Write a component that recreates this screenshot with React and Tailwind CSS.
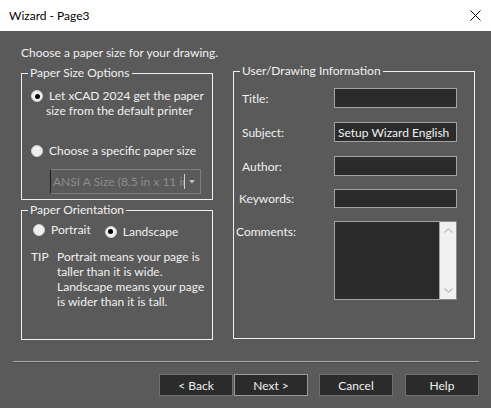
import React from "react";

function Radio({ checked }) {
  return (
    <span className="w-[12px] h-[12px] rounded-full bg-[#f0f0f0] border border-[#cfcfcf] flex items-center justify-center shrink-0">
      {checked && <span className="w-[5px] h-[5px] rounded-full bg-black" />}
    </span>
  );
}

function Field({ children, w, pl = 8, mt = 0 }) {
  return (
    <div className="flex items-center" style={{ marginTop: mt }}>
      <span className="w-[100px] shrink-0" style={{ paddingLeft: pl }}>{children}</span>
      {w}
    </div>
  );
}

function Input({ h = 20, text }) {
  return (
    <div className="w-[123px] border border-[#a3a3a3] bg-[#2b2b2b] flex items-center pl-[3px] whitespace-nowrap overflow-hidden" style={{ height: h }}>
      {text}
    </div>
  );
}

function Btn({ children, def, className = "" }) {
  return (
    <div className={"w-[74px] h-[22px] flex items-center justify-center bg-[#2b2b2b] border " + (def ? "border-[#9a9a9a] " : "border-[#6f6f6f] ") + className}>
      {children}
    </div>
  );
}

export default function App() {
  return (
    <div className="relative w-[491px] h-[408px] bg-[#5a5a5a] flex flex-col overflow-hidden text-[12px] leading-[15px] text-[#f0f0f0] font-['Lato',sans-serif]">
      <div className="h-[31px] bg-white flex items-center justify-between pl-[9px] pr-[10px] text-black shrink-0">
        <span>Wizard - Page3</span>
        <svg width="11" height="11" viewBox="0 0 11 11">
          <path d="M0.5 0.5L10.5 10.5M10.5 0.5L0.5 10.5" stroke="#000" strokeWidth="1" />
        </svg>
      </div>
      <div className="flex flex-col px-[21px]">
        <div className="mt-[14px] h-[16px] leading-[16px]">Choose a paper size for your drawing.</div>
        <div className="flex items-start gap-[20px] mt-[2px]">
          <div className="w-[192px] shrink-0 pt-[2px] flex flex-col gap-[2px]">
            <fieldset className="min-w-0 h-[135px] border border-[#f0f0f0]">
              <legend className="ml-[6px] px-[2px] leading-[16px]">Paper Size Options</legend>
              <div className="pl-[9px] pt-[7px]">
                <div className="flex items-start">
                  <span className="mt-[2px]"><Radio checked /></span>
                  <div className="ml-[6px] whitespace-nowrap">
                    <div>Let xCAD 2024 get the paper</div>
                    <div className="-ml-[3px]">size from the default printer</div>
                  </div>
                </div>
                <div className="flex items-center mt-[25px]">
                  <Radio />
                  <span className="ml-[6px] whitespace-nowrap">Choose a specific paper size</span>
                </div>
                <div className="ml-[19px] mt-[11px] w-[151px] h-[25px] border border-[#7d7d7d] border-l-[#1e1e1e] flex items-center text-[#8c8c8c]">
                  <span className="w-[134px] pl-[2px] overflow-hidden whitespace-nowrap border-r border-[#d0d0d0]">ANSI A Size (8.5 in x 11 in)</span>
                  <svg className="ml-[4px]" width="6" height="4" viewBox="0 0 6 4">
                    <path d="M0 0H6L3 3.5Z" fill="#c0c0c0" />
                  </svg>
                </div>
              </div>
            </fieldset>
            <fieldset className="min-w-0 h-[138px] border border-[#f0f0f0]">
              <legend className="ml-[6px] px-[2px] leading-[16px]">Paper Orientation</legend>
              <div className="flex items-start pt-[4px] pl-[11px]">
                <div className="flex items-center">
                  <Radio />
                  <span className="ml-[6px]">Portrait</span>
                </div>
                <div className="flex items-center ml-[14px] mt-[2px]">
                  <Radio checked />
                  <span className="ml-[6px]">Landscape</span>
                </div>
              </div>
              <div className="flex pl-[9px] mt-[10px] whitespace-nowrap">
                <span className="w-[26px] shrink-0">TIP</span>
                <div>
                  <div>Portrait means your page is</div>
                  <div>taller than it is wide.</div>
                  <div>Landscape means your page</div>
                  <div>is wider than it is tall.</div>
                </div>
              </div>
            </fieldset>
          </div>
          <fieldset className="min-w-0 shrink-0 w-[242px] h-[276px] border border-[#f0f0f0]">
            <legend className="ml-[6px] px-[2px] leading-[16px]">User/Drawing Information</legend>
            <div className="flex flex-col pt-[9px]">
              <Field w={<Input />}>Title:</Field>
              <Field mt={14} w={<Input text="Setup Wizard English" />}>Subject:</Field>
              <Field mt={14} w={<Input />}>Author:</Field>
              <Field mt={13} pl={5} w={<Input h={19} />}>Keywords:</Field>
              <div className="flex items-start mt-[13px]">
                <span className="w-[100px] shrink-0 pl-[2px] mt-[3px]">Comments:</span>
                <div className="w-[123px] h-[79px] flex">
                  <div className="flex-1 bg-[#2b2b2b] border border-[#a3a3a3]" />
                  <div className="w-[17px] bg-[#f0f0f0] border border-[#8a8a8a] border-l-0 flex flex-col items-center justify-between py-[6px]">
                    <svg width="9" height="5" viewBox="0 0 9 5"><path d="M0.5 4.5L4.5 0.8L8.5 4.5" stroke="#bdbdbd" fill="none" strokeWidth="1.2" /></svg>
                    <svg width="9" height="5" viewBox="0 0 9 5"><path d="M0.5 0.5L4.5 4.2L8.5 0.5" stroke="#bdbdbd" fill="none" strokeWidth="1.2" /></svg>
                  </div>
                </div>
              </div>
            </div>
          </fieldset>
        </div>
      </div>
      <div className="ml-[13px] w-[466px] h-[2px] mt-[21px] border-t border-[#a8a8a8] border-b border-b-[#4a4a4a]" />
      <div className="flex pl-[159px] mt-[11px]">
        <Btn>&lt; Back</Btn>
        <Btn def className="ml-[1px]">Next &gt;</Btn>
        <Btn className="ml-[11px]">Cancel</Btn>
        <Btn className="ml-[12px]">Help</Btn>
      </div>
    </div>
  );
}
